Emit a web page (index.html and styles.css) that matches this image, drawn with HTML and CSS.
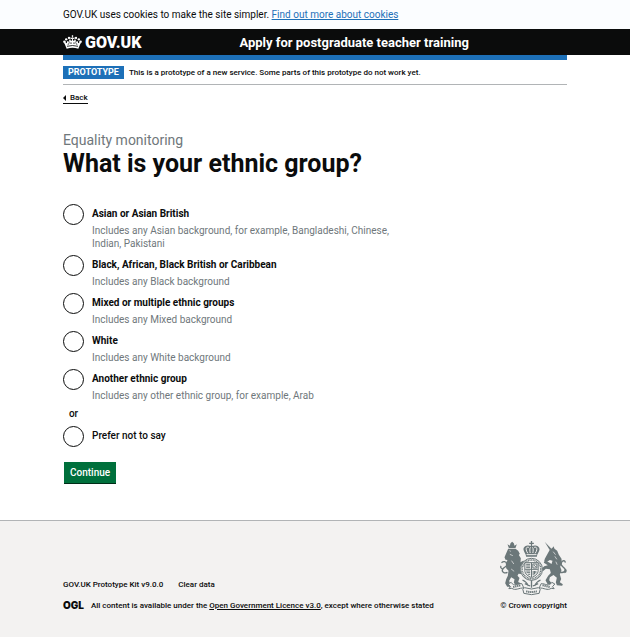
FILE: index.html
```html
<!DOCTYPE html>
<html lang="en">
<head>
<meta charset="utf-8">
<meta name="viewport" content="width=device-width, initial-scale=1">
<title>What is your ethnic group? - Apply for postgraduate teacher training</title>
<link rel="stylesheet" href="styles.css">
</head>
<body>
<div class="cookie-banner">
  <p class="container">GOV.UK uses cookies to make the site simpler. <a class="link" href="#">Find out more about cookies</a></p>
</div>
<header class="header">
  <div class="container header-row">
    <a class="logo" href="#">
      <svg class="logo-crown" viewBox="0 0 57 42" aria-hidden="true">
        <g fill="#fff">
          <path d="M28.500 0l3 3-2 2v4l5-2v6l-5-2 1 6c3 1 5-1 5-4 4 1 4 7 1 10 3 0 5-2 4-5 4-1 6 3 4 7 4-1 6-4 5-8 5 2 5 7 2 11L46 41Q28.500 36 11 41L5.500 28c-3-4-3-9 2-11-1 4 1 7 5 8-2-4 0-8 4-7-1 3 1 5 4 5-3-3-3-9 1-10 0 3 2 5 5 4l1-6-5 2V7l5 2V5l-2-2z"/>
          <circle cx="18" cy="9" r="3.500"/><circle cx="39" cy="9" r="3.500"/>
          <circle cx="9.500" cy="13" r="3.500"/><circle cx="47.500" cy="13" r="3.500"/>
          <circle cx="4" cy="20" r="3.500"/><circle cx="53" cy="20" r="3.500"/>
        </g>
        <path d="M12 34Q28.500 29 45 34M14 29l5-4M43 29l-5-4M24 27v-5M33 27v-5" fill="none" stroke="#0b0c0c" stroke-width="2.500"/>
      </svg>
      <span>GOV.UK</span>
    </a>
    <a class="service-name" href="#">Apply for postgraduate teacher training</a>
  </div>
</header>
<div class="container">
  <div class="phase-banner">
    <strong class="tag">PROTOTYPE</strong>
    <span>This is a prototype of a new service. Some parts of this prototype do not work yet.</span>
  </div>
  <a class="back-link" href="#">Back</a>
  <main>
    <form class="form">
      <fieldset class="fieldset">
        <legend class="legend">
          <span class="caption">Equality monitoring</span>
          <h1 class="title">What is your ethnic group?</h1>
        </legend>
        <div class="radios">
          <div class="radio">
            <input type="radio" name="group" id="asian" aria-describedby="asian-hint">
            <label class="strong" for="asian">Asian or Asian British</label>
            <span class="hint" id="asian-hint">Includes any Asian background, for example, Bangladeshi, Chinese, Indian, Pakistani</span>
          </div>
          <div class="radio">
            <input type="radio" name="group" id="black" aria-describedby="black-hint">
            <label class="strong" for="black">Black, African, Black British or Caribbean</label>
            <span class="hint" id="black-hint">Includes any Black background</span>
          </div>
          <div class="radio">
            <input type="radio" name="group" id="mixed" aria-describedby="mixed-hint">
            <label class="strong" for="mixed">Mixed or multiple ethnic groups</label>
            <span class="hint" id="mixed-hint">Includes any Mixed background</span>
          </div>
          <div class="radio">
            <input type="radio" name="group" id="white" aria-describedby="white-hint">
            <label class="strong" for="white">White</label>
            <span class="hint" id="white-hint">Includes any White background</span>
          </div>
          <div class="radio">
            <input type="radio" name="group" id="another" aria-describedby="another-hint">
            <label class="strong" for="another">Another ethnic group</label>
            <span class="hint" id="another-hint">Includes any other ethnic group, for example, Arab</span>
          </div>
          <div class="divider">or</div>
          <div class="radio">
            <input type="radio" name="group" id="none">
            <label for="none">Prefer not to say</label>
          </div>
        </div>
      </fieldset>
      <button class="button" type="submit">Continue</button>
    </form>
  </main>
</div>
<footer class="footer">
  <div class="container footer-row">
    <div class="footer-meta">
      <ul class="footer-links">
        <li><a href="#">GOV.UK Prototype Kit v9.0.0</a></li>
        <li><a href="#">Clear data</a></li>
      </ul>
      <div class="licence">
        <span class="ogl">OGL</span>
        <span>All content is available under the <a class="licence-link" href="#">Open Government Licence v3.0</a>, except where otherwise stated</span>
      </div>
    </div>
    <a class="copyright" href="#">
      <svg class="crest" viewBox="0 0 200 168" aria-hidden="true">
        <!-- lion -->
        <g fill="#6b7779">
          <path d="M26 21l-4-11 7 4 2-7 5-5 5 5 2 7 7-4-4 11z"/>
          <path d="M24 23h22l8 6 5 9-3 4 6 10-1 12 8-5 6 2-2 8-12 8-1 11 8 6-3 5-10-1-3 6 6 7-4 12 8 4 4 6-18 1-7-9 2-10-10-6-6 10 2 8 7 5 2 6-17-1-6-10 3-12 5-11 2-15-7-7-1-15 5-10-6-1-3-7z"/>
        </g>
        <path d="M22 94C12 99 3 91 8 84S22 77 20 69 10 60 4 65M9 85c-7-2-9-7-6-10" fill="none" stroke="#6b7779" stroke-width="4"/>
        <path d="M29 40l9 4M34 59l7 10M33 84l9 7M28 29l4 2" fill="none" stroke="#f3f2f1" stroke-width="2"/>
        <!-- unicorn -->
        <g fill="#6b7779">
          <path d="M134 3l21 22-6 3z"/>
          <path d="M148 28l9-8 3-4 3 7 8 6 5 12 8 12 1 14-5 10 4 11-5 12 4 14-4 10 9 6-2 4-16-1-3-9 3-14-10-8-11 7-2 9 7 8-2 5-10-2-6-11 8-14 8-8-3-11-12-2-8 7-6-5 9-9 11-3-12-8 2-6 13 5 8 5 3-10-8-2-9 6-8-2 2-8z"/>
        </g>
        <path d="M178 93c14 5 21-5 14-12s-13-9-8-17 12-5 11 1M192 82c7 3 8 10 1 13" fill="none" stroke="#6b7779" stroke-width="4"/>
        <path d="M159 32l7 9M164 46l6 9M167 62l4 9" fill="none" stroke="#f3f2f1" stroke-width="2"/>
        <!-- royal crown -->
        <path d="M92 0h4v5h5v4h-5v6c9-4 23 0 22 11-1 7-7 11-8 21H78c-1-10-7-14-8-21-1-11 13-15 22-11V9h-5V5h5z" fill="#6b7779"/>
        <path d="M86 19c-9-3-11 7-3 18M102 19c9-3 11 7 3 18M91 19c-3 4-2 11-1 17M97 19c3 4 2 11 1 17M79 41h30" fill="none" stroke="#f3f2f1" stroke-width="3"/>
        <!-- garter and quartered shield -->
        <circle cx="94" cy="85" r="33" fill="#f3f2f1" stroke="#6b7779" stroke-width="3"/>
        <circle cx="94" cy="85" r="28" fill="none" stroke="#6b7779" stroke-width="5" stroke-dasharray="3 2"/>
        <g transform="translate(0 8)">
          <path d="M74 57h40v23c0 12-10 17-20 22-10-5-20-10-20-22z" fill="#f3f2f1" stroke="#6b7779" stroke-width="3"/>
          <path d="M94 57v43M75 77h38M78 62h12M78 67h12M78 72h12M98 61h12v12H98zM101 64l6 6M78 82h12M79 87h11M84 92h6M99 82v13M103 82v10M107 82v7" fill="none" stroke="#6b7779" stroke-width="3"/>
        </g>
        <!-- compartment and motto scroll -->
        <path d="M67 117q12 5 18 18M121 117q-12 5-18 18M94 118v22M74 128l16 7M114 128l-16 7" fill="none" stroke="#6b7779" stroke-width="4"/>
        <g fill="#f3f2f1" stroke="#6b7779" stroke-width="3">
          <path d="M24 129l9-5c9 15 20 3 32 4l6 13c-14-1-25 9-36 1l-9 1 5-6z"/>
          <path d="M164 129l-9-5c-9 15-20 3-32 4l-6 13c14-1 25 9 36 1l9 1-5-6z"/>
          <path d="M68 145l5-5q21 8 42 0l5 5-3 12q-23 8-46 0z"/>
        </g>
        <path d="M39 138l22-5M127 133l22 5M78 151q16 4 32 0" fill="none" stroke="#6b7779" stroke-width="6" stroke-dasharray="4 2"/>
      </svg>
      <span>© Crown copyright</span>
    </a>
  </div>
</footer>
</body>
</html>
```
FILE: styles.css
```css
* { box-sizing: border-box; }
body {
  margin: 0;
  min-height: 100vh;
  display: flex;
  flex-direction: column;
  background: #fff;
  color: #0b0c0c;
  font: 400 10px/13px Roboto, "Liberation Sans", sans-serif;
}
a { color: inherit; text-decoration: none; }
.container { width: 100%; margin: 0; padding: 0 10%; }
.cookie-banner { background: #fbfdff; padding: 8px 0; }
.link { color: #1d70b8; text-decoration: underline; }
.header { background: #0b0c0c; color: #fff; }
.header-row { display: flex; align-items: center; height: 26px; }
.logo { display: flex; align-items: center; gap: 3px; flex: 0 0 35%; font-size: 16px; font-weight: 900; }
.logo-crown { width: 19px; height: 14px; }
.service-name { font-size: 13px; font-weight: 700; }
.phase-banner {
  display: flex;
  align-items: center;
  gap: 5px;
  height: 30px;
  border-top: 5px solid #1d70b8;
  border-bottom: 1px solid #b1b4b6;
  font-size: 8px;
  font-weight: 500;
}
.tag { background: #1d70b8; color: #fff; padding: 0 5px; font-size: 9px; font-weight: 700; }
.back-link { display: inline-flex; align-items: center; gap: 4px; margin-top: 7px; border-bottom: 1px solid #0b0c0c; font-size: 8px; font-weight: 500; line-height: 11px; }
.back-link::before { content: ""; border: 3px solid transparent; border-right-color: #0b0c0c; border-left: 0; }
.form { padding: 28px 0 36px; }
.fieldset { margin: 0; padding: 0; border: 0; min-width: 0; }
.legend { padding: 0; margin-bottom: 24px; }
.caption { display: block; color: #6f777b; font-size: 14px; line-height: 16px; }
.title { margin: 0; font-size: 25px; line-height: 32px; font-weight: 700; }
.radios { display: flex; flex-direction: column; gap: 5px; max-width: 336px; }
.radio { display: grid; grid-template-columns: 21px 1fr; column-gap: 8px; }
.radio input {
  grid-row: span 2;
  appearance: none;
  width: 21px;
  height: 21px;
  margin: 0;
  border: 1px solid #0b0c0c;
  border-radius: 50%;
}
.radio input:checked { background: radial-gradient(#0b0c0c 5px, #fff 6px); }
.radio label { line-height: 20px; font-weight: 500; }
.radio .strong { font-weight: 700; }
.hint { color: #6f777b; }
.divider { width: 21px; line-height: 14px; text-align: center; font-weight: 500; }
.button {
  margin: 15px 1px 0;
  padding: 4px 6px;
  border: 0;
  border-bottom: 1px solid #002d18;
  background: #00703c;
  color: #fff;
  font: inherit;
  font-weight: 500;
}
.footer { flex: 1; border-top: 1px solid #b1b4b6; background: #f3f2f1; padding: 20px 0 24px; font-size: 8px; font-weight: 500; }
.footer-row { display: flex; justify-content: space-between; align-items: flex-end; }
.footer-links { display: flex; gap: 15px; list-style: none; margin: 0 0 8px; padding: 0; }
.licence { display: flex; gap: 7px; }
.ogl { font-family: Inter, sans-serif; font-size: 10px; font-weight: 900; }
.licence-link { text-decoration: underline; }
.copyright { display: flex; flex-direction: column; align-items: center; gap: 2px; }
.crest { width: 67px; height: 56px; }
```
